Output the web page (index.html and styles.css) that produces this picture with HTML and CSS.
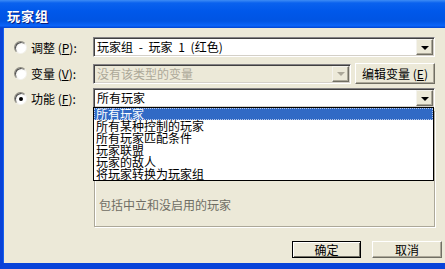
FILE: index.html
```html
<!DOCTYPE html>
<html lang="zh-CN">
<head>
    <meta charset="UTF-8">
    <meta name="viewport" content="width=device-width, initial-scale=1.0">
    <title>玩家组</title>
    <link rel="stylesheet" href="styles.css">
</head>
<body>

<div class="window">
    <div class="titlebar">
        <span class="title">玩家组</span>
    </div>
    <div class="client">
        <div class="row">
            <label class="choice"><span class="radio"></span><span>调整 (<u>P</u>):</span></label>
            <div class="combo">
                <span class="combo-text spaced">玩家组 - 玩家 1 (红色)</span>
                <span class="drop"><i class="arrow"></i></span>
            </div>
        </div>

        <div class="row row-var">
            <label class="choice"><span class="radio"></span><span>变量 (<u>V</u>):</span></label>
            <div class="combo disabled">
                <span class="combo-text">没有该类型的变量</span>
                <span class="drop"><i class="arrow"></i></span>
            </div>
            <button class="btn btn-edit">编辑变量 (<u>E</u>)</button>
        </div>

        <div class="row row-last">
            <label class="choice"><span class="radio checked"></span><span>功能 (<u>F</u>):</span></label>
            <div class="combo open">
                <span class="combo-text">所有玩家</span>
                <span class="drop"><i class="arrow"></i></span>
                <ul class="listbox">
                    <li class="selected">所有玩家</li>
                    <li>所有某种控制的玩家</li>
                    <li>所有玩家匹配条件</li>
                    <li>玩家联盟</li>
                    <li>玩家的敌人</li>
                    <li>将玩家转换为玩家组</li>
                </ul>
            </div>
        </div>

        <div class="panel">
            <p class="hint">包括中立和没启用的玩家</p>
        </div>

        <div class="buttons">
            <button class="btn btn-default">确定</button>
            <button class="btn">取消</button>
        </div>
    </div>
</div>

</body>
</html>
```

FILE: styles.css
```css
body {
    margin: 0;
    padding: 0;
    overflow: hidden;
    font-family: "Noto Sans CJK SC", "Liberation Sans", sans-serif;
    font-size: 12px;
    color: #000;
    background: #ece9d8;
}
.window {
    width: 443px;
    height: 263px;
    border-left: 3px solid #0842d8;
    border-bottom: 6px solid #0843d9;
    box-shadow: inset 1px 0 0 #1660ee;
    background-color: #ece9d8;
}
.titlebar {
    height: 28px;
    margin-left: -3px;
    padding-left: 7px;
    display: flex;
    align-items: center;
    background: linear-gradient(to bottom, #3d8cf5 0, #0a62ee 3px, #0058ea 40%, #0054e3 75%, #0a64f8 92%, #0042d0 100%);
}
.titlebar .title {
    color: #fff;
    font-weight: bold;
    font-size: 13px;
    letter-spacing: 1px;
    text-shadow: 1px 1px 0 #0a1e80;
    margin-top: 2px;
}
.client {
    height: 235px;
    box-sizing: border-box;
    padding: 9px 11px 0 11px;
    display: flex;
    flex-direction: column;
}
.row {
    display: flex;
    align-items: center;
    height: 20px;
    margin-bottom: 6px;
}
.row-var {
    height: 21px;
    margin-bottom: 4px;
}
.row-last {
    margin-bottom: 0;
}
.choice {
    width: 79px;
    flex: none;
    display: flex;
    align-items: center;
    white-space: nowrap;
}
.radio {
    width: 11px;
    height: 11px;
    border-radius: 50%;
    background: radial-gradient(circle at 65% 65%, #fff 0, #fff 40%, #e6e4da 100%);
    border: 1px solid;
    border-color: #8c8a80 #f4f3ee #f4f3ee #8c8a80;
    box-shadow: inset 1px 1px 0 #505050;
    margin-right: 4px;
    position: relative;
}
.radio.checked::after {
    content: "";
    position: absolute;
    left: 4px;
    top: 4px;
    width: 4px;
    height: 4px;
    border-radius: 50%;
    background: #000;
}
.combo {
    flex: 1;
    height: 20px;
    box-sizing: border-box;
    display: flex;
    align-items: center;
    background: #fff;
    border: 1px solid;
    border-color: #848284 #fff #fff #848284;
    box-shadow: inset 1px 1px 0 #404040, inset -1px -1px 0 #d4d0c8;
    padding: 0 1px 0 3px;
    position: relative;
}
.combo-text {
    flex: 1;
    white-space: nowrap;
    line-height: 14px;
}
.combo-text.spaced {
    word-spacing: 3px;
}
.drop {
    width: 17px;
    height: 16px;
    box-sizing: border-box;
    background: #ece9d8;
    border: 1px solid;
    border-color: #f4f3ee #716f64 #716f64 #f4f3ee;
    box-shadow: inset -1px -1px 0 #aca899;
    display: flex;
    align-items: center;
    justify-content: center;
}
.arrow {
    width: 0;
    height: 0;
    border-left: 4px solid transparent;
    border-right: 4px solid transparent;
    border-top: 4px solid #000;
    margin-top: 1px;
}
.combo.disabled {
    background: #ece9d8;
    color: #aca899;
}
.combo.disabled .arrow {
    border-top-color: #aca899;
}
.btn {
    font-family: inherit;
    font-size: 12px;
    color: #000;
    background: #ece9d8;
    border: 1px solid;
    border-color: #fff #716f64 #716f64 #fff;
    box-shadow: inset -1px -1px 0 #aca899;
    padding: 0;
    height: 17px;
    line-height: 14px;
    white-space: nowrap;
}
.btn-edit {
    flex: none;
    width: 80px;
    height: 21px;
    margin-left: 4px;
}
.listbox {
    position: absolute;
    left: -1px;
    right: 0;
    top: 100%;
    margin: 0;
    padding: 0;
    list-style: none;
    background: #fff;
    border: 1px solid #000;
    z-index: 2;
}
.listbox li {
    height: 12px;
    line-height: 12px;
    padding-left: 2px;
    white-space: nowrap;
}
.listbox li.selected {
    background: #316ac5;
    color: #fff;
    outline: 1px dotted #b8c8e8;
    outline-offset: -1px;
}
.panel {
    margin: 3px 0 0 80px;
    height: 116px;
    box-sizing: border-box;
    border: 1px solid #aca899;
    box-shadow: 1px 1px 0 #fff, inset 1px 1px 0 #fff;
    display: flex;
    align-items: flex-end;
}
.hint {
    margin: 0 0 14px 4px;
    color: #6f6d64;
    line-height: 14px;
}
.buttons {
    display: flex;
    justify-content: flex-end;
    gap: 11px;
    margin: 14px -7px 0 0;
}
.buttons .btn {
    width: 70px;
    height: 17px;
}
.buttons .btn-default {
    width: 69px;
    border-color: #000;
    box-shadow: inset 1px 1px 0 #fff, inset -1px -1px 0 #716f64;
}
```
